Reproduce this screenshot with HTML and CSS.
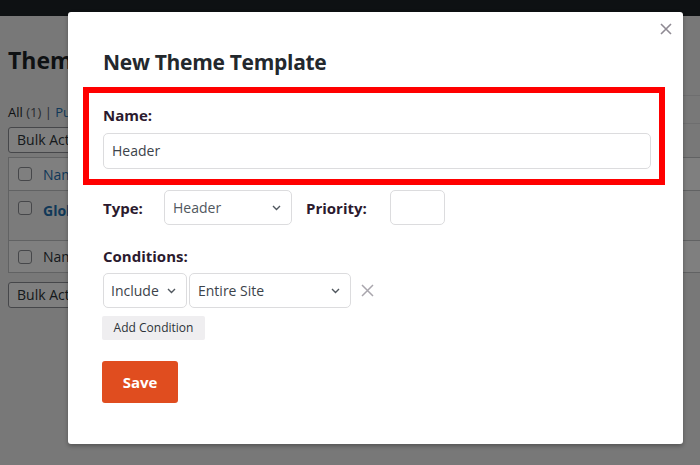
FILE: index.html
```html
<!DOCTYPE html>
<html>
<head>
<meta charset="utf-8">
<link rel="stylesheet" href="styles.css">
</head>
<body>
<div class="adminbar"></div>
<div class="page">
  <h1 class="page-title">Theme Templates</h1>
  <div class="subrow">
    <div class="views"><b>All</b> <span class="count">(1)</span> <span class="sep">|</span> <a>Published</a></div>
    <div class="search"></div>
  </div>
  <div class="bulk">Bulk Actions</div>
  <div class="table">
    <div class="trow thead"><span class="cb"></span><span class="tname">Name</span></div>
    <div class="trow tbody"><span class="cb"></span><span class="tglob">Global Header</span></div>
    <div class="trow tfoot"><span class="cb"></span><span class="tfname">Name</span></div>
  </div>
  <div class="bulk">Bulk Actions</div>
</div>

<div class="overlay"></div>

<div class="modal">
  <svg class="close" width="12" height="12" viewBox="0 0 12 12"><path d="M1 1L11 11M11 1L1 11" stroke="#8f8a93" stroke-width="1.6" fill="none"/></svg>
  <h2 class="modal-title">New Theme Template</h2>
  <div class="field">
    <div class="label">Name:</div>
    <div class="input">Header</div>
  </div>
  <div class="type-row">
    <div class="label type-label">Type:</div>
    <div class="select type-select"><span>Header</span><svg width="9" height="6" viewBox="0 0 9 6"><path d="M1 1L4.5 4.5L8 1" stroke="#50575e" stroke-width="1.4" fill="none"/></svg></div>
    <div class="label prio-label">Priority:</div>
    <div class="input prio"></div>
  </div>
  <div class="label cond-label">Conditions:</div>
  <div class="cond-row">
    <div class="select inc-select"><span>Include</span><svg width="9" height="6" viewBox="0 0 9 6"><path d="M1 1L4.5 4.5L8 1" stroke="#50575e" stroke-width="1.4" fill="none"/></svg></div>
    <div class="select site-select"><span>Entire Site</span><svg width="9" height="6" viewBox="0 0 9 6"><path d="M1 1L4.5 4.5L8 1" stroke="#50575e" stroke-width="1.4" fill="none"/></svg></div>
    <svg class="remove" width="13" height="13" viewBox="0 0 13 13"><path d="M1 1L12 12M12 1L1 12" stroke="#a9a6ad" stroke-width="1.5" fill="none"/></svg>
  </div>
  <div class="add-btn">Add Condition</div>
  <div class="save-btn">Save</div>
  <div class="highlight"></div>
</div>
</body>
</html>
```

FILE: styles.css
```css
* { box-sizing: border-box; }
html, body { margin: 0; padding: 0; }
body {
  width: 700px;
  height: 465px;
  overflow: hidden;
  background: #f0f0f1;
  font-family: "Open Sans", "Noto Sans", sans-serif;
  color: #1d2327;
  position: relative;
}
.adminbar { height: 16px; background: #1d2327; }
.page { padding: 0 0 0 8px; width: 700px; }
.page-title {
  margin: 0;
  padding-top: 29px;
  font-size: 23px;
  line-height: 30px;
  font-weight: 700;
  color: #1d2327;
  white-space: nowrap;
}
.subrow { display: flex; justify-content: space-between; align-items: flex-end; margin-top: 20px; }
.views { font-size: 13px; line-height: 20px; color: #1d2327; padding-bottom: 2px; }
.views b { font-weight: 400; }
.views .count, .views .sep { color: #50575e; }
.views a { color: #2271b1; }
.search { width: 200px; height: 29px; border-top: 1px solid #dcdcde; border-bottom: 1px solid #dcdcde; }
.bulk {
  margin-top: 3px;
  width: 170px;
  height: 26px;
  border: 1px solid #8c8f94;
  border-radius: 3px;
  font-size: 14px;
  line-height: 24px;
  padding-left: 8px;
  color: #2c3338;
  background: #fff;
}
.table { margin-top: 4px; border: 1px solid #c3c4c7; border-right: 0; background: #fff; }
.trow { display: flex; align-items: center; padding-left: 9px; font-size: 14px; }
.thead { height: 33px; border-bottom: 1px solid #c3c4c7; }
.tbody { height: 49px; align-items: flex-start; padding-top: 10px; background: #f6f7f7; }
.tfoot { height: 32px; border-top: 1px solid #c3c4c7; }
.cb { width: 14px; height: 14px; border: 1px solid #8c8f94; border-radius: 3px; background: #fff; margin-right: 11px; }
.tname { color: #2271b1; }
.tglob { color: #2271b1; font-weight: 700; }
.tfname { color: #2c3338; }
.table + .bulk { margin-top: 9px; }

.overlay { position: absolute; inset: 0; background: rgba(0,0,0,0.5); }

.modal {
  position: absolute;
  left: 68px;
  top: 12px;
  width: 615px;
  height: 432px;
  background: #fff;
  border-radius: 3px;
  box-shadow: 0 2px 4px rgba(0,0,0,0.3);
  padding: 36px 32px 0 35px;
}
.close { position: absolute; right: 11px; top: 11px; }
.modal-title {
  margin: 0;
  font-size: 21px;
  line-height: 28px;
  font-weight: 700;
  letter-spacing: -0.3px;
  color: #23282d;
}
.label {
  font-size: 15px;
  line-height: 20px;
  font-weight: 700;
  color: #2b1a2e;
}
.field { margin-top: 29px; }
.input {
  margin-top: 8px;
  height: 36px;
  border: 1px solid #dcdcde;
  border-radius: 5px;
  font-size: 14px;
  line-height: 34px;
  padding-left: 8px;
  color: #3c434a;
}
.type-row { display: flex; align-items: center; margin-top: 21px; height: 35px; }
.type-label { width: 61px; }
.select {
  display: flex;
  align-items: center;
  justify-content: space-between;
  height: 35px;
  border: 1px solid #dcdcde;
  border-radius: 5px;
  font-size: 14px;
  padding: 0 10px 0 8px;
  color: #50575e;
}
.type-select { width: 128px; }
.prio-label { margin-left: 14px; width: 84px; }
.prio { margin-top: 0; width: 55px; height: 35px; }
.cond-label { margin-top: 21px; }
.cond-row { display: flex; align-items: center; margin-top: 7px; gap: 2px; }
.inc-select { width: 84px; height: 35px; color: #3c434a; padding-left: 7px; }
.site-select { width: 162px; height: 35px; color: #3c434a; padding-left: 8px; }
.remove { margin-left: 8px; }
.add-btn {
  margin-top: 8px;
  margin-left: -1px;
  width: 103px;
  height: 24px;
  background: #efeef0;
  border-radius: 2px;
  font-size: 12px;
  line-height: 24px;
  text-align: center;
  color: #2c3338;
}
.save-btn {
  margin-top: 21px;
  margin-left: -1px;
  width: 76px;
  height: 42px;
  background: #e04d1f;
  border-radius: 3px;
  color: #fff;
  font-size: 15px;
  font-weight: 700;
  line-height: 42px;
  text-align: center;
}
.highlight {
  position: absolute;
  left: 15px;
  top: 75px;
  width: 582px;
  height: 98px;
  border: 6px solid #ff0000;
}
```
